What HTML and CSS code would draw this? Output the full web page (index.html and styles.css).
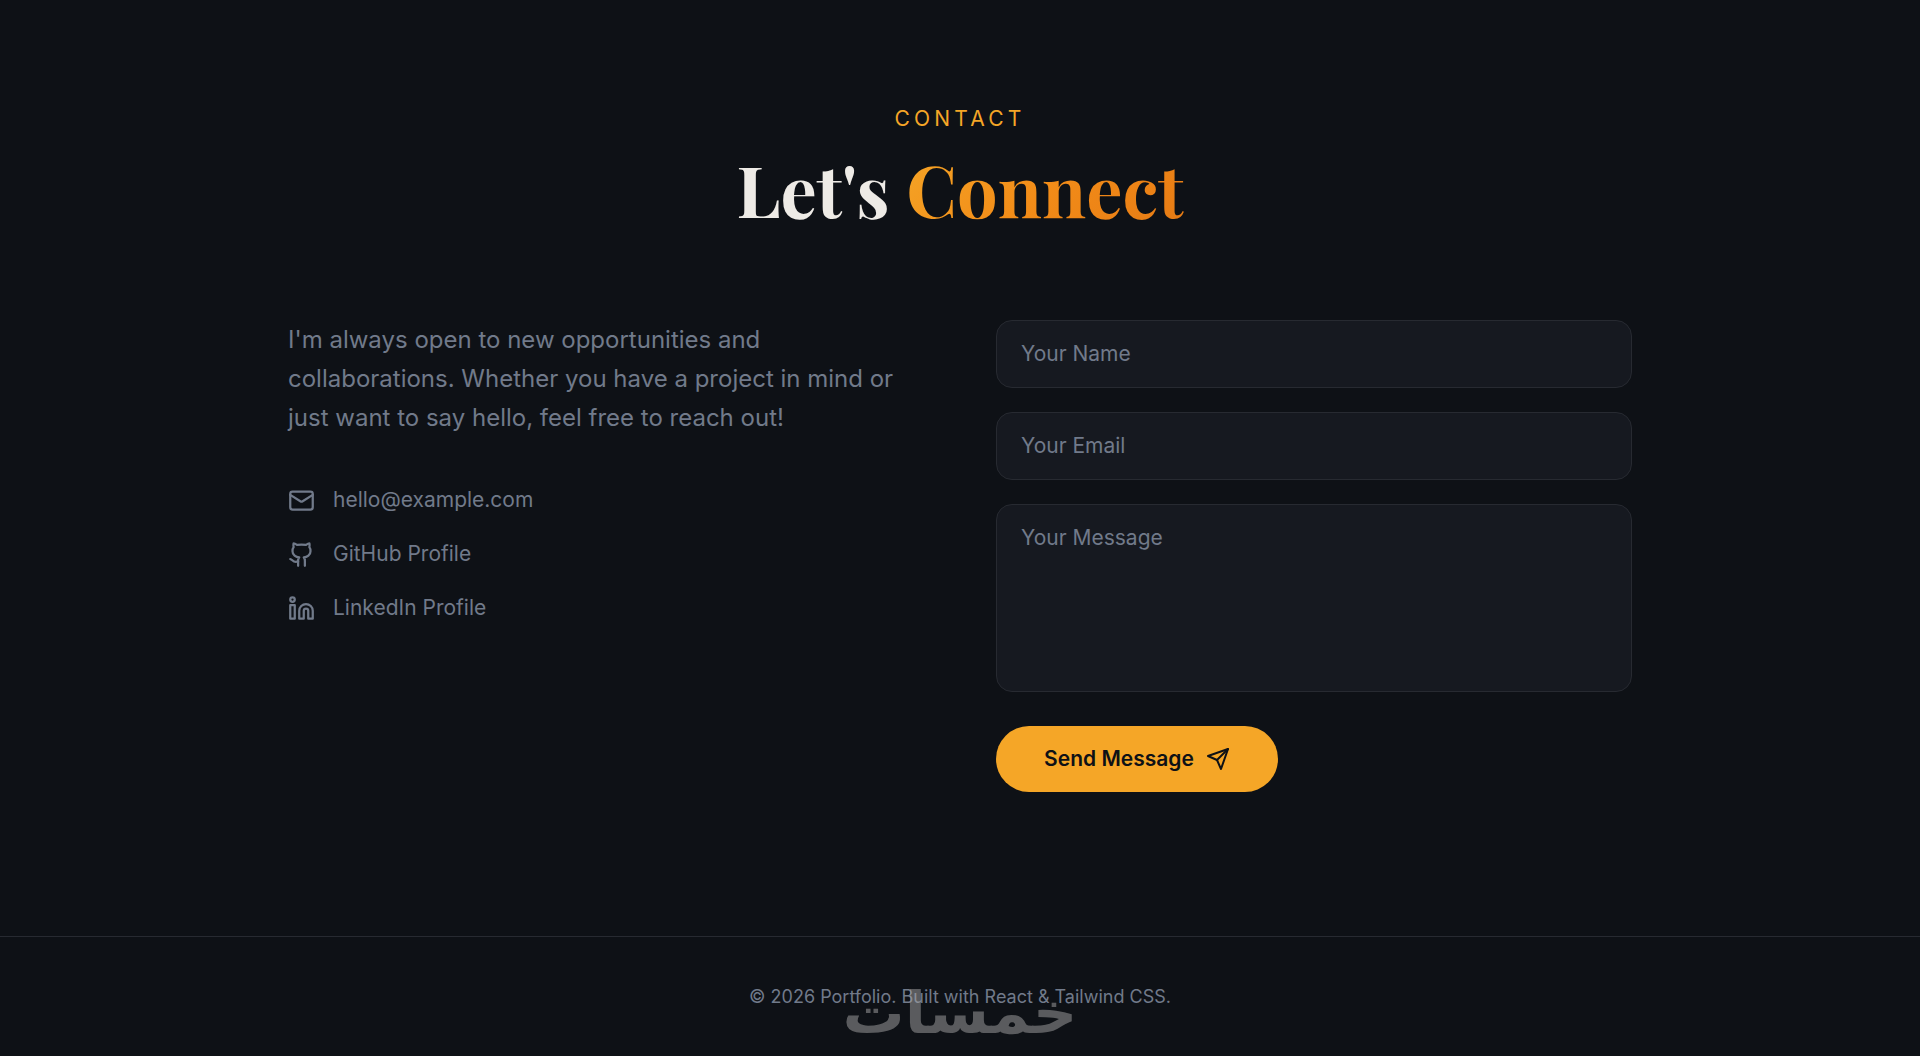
FILE: index.html
```
<!DOCTYPE html>
<html lang="en">
<head>
    <meta charset="UTF-8">
    <meta name="viewport" content="width=device-width, initial-scale=1.0">
    <title>Portfolio - Contact</title>
    <link rel="stylesheet" href="styles.css">
</head>
<body>
    <section id="contact" class="contact">
        <div class="heading">
            <p class="eyebrow">Contact</p>
            <h2>Let's <span class="gradient-text">Connect</span></h2>
        </div>

        <div class="contact-grid">
            <div class="info">
                <p class="intro">I'm always open to new opportunities and collaborations. Whether you have a project in mind or just want to say hello, feel free to reach out!</p>

                <div class="links">
                    <a href="mailto:hello@example.com">
                        <svg class="icon" viewBox="0 0 24 24"><rect width="20" height="16" x="2" y="4" rx="2"/><path d="m22 7-8.97 5.7a1.94 1.94 0 0 1-2.06 0L2 7"/></svg>
                        <span>hello@example.com</span>
                    </a>
                    <a href="#">
                        <svg class="icon" viewBox="0 0 24 24"><path d="M15 22v-4a4.8 4.8 0 0 0-1-3.5c3 0 6-2 6-5.5.08-1.25-.27-2.48-1-3.5.28-1.15.28-2.35 0-3.5 0 0-1 0-3 1.5-2.64-.5-5.36-.5-8 0C6 2 5 2 5 2c-.3 1.15-.3 2.35 0 3.5A5.403 5.403 0 0 0 4 9c0 3.5 3 5.5 6 5.5-.39.49-.68 1.05-.85 1.65-.17.6-.22 1.23-.15 1.85v4"/><path d="M9 18c-4.51 2-5-2-7-2"/></svg>
                        <span>GitHub Profile</span>
                    </a>
                    <a href="#">
                        <svg class="icon" viewBox="0 0 24 24"><path d="M16 8a6 6 0 0 1 6 6v7h-4v-7a2 2 0 0 0-2-2 2 2 0 0 0-2 2v7h-4v-7a6 6 0 0 1 6-6z"/><rect width="4" height="12" x="2" y="9"/><circle cx="4" cy="4" r="2"/></svg>
                        <span>LinkedIn Profile</span>
                    </a>
                </div>
            </div>

            <form class="form">
                <input type="text" placeholder="Your Name">
                <input type="email" placeholder="Your Email">
                <textarea placeholder="Your Message"></textarea>
                <button type="submit">
                    Send Message
                    <svg class="icon send" viewBox="0 0 24 24"><path d="m22 2-7 20-4-9-9-4Z"/><path d="M22 2 11 13"/></svg>
                </button>
            </form>
        </div>
    </section>

    <footer>
        <p>© 2026 Portfolio. Built with React &amp; Tailwind CSS.</p>
        <div class="watermark" lang="ar" dir="rtl">خمسات</div>
    </footer>
</body>
</html>
```

FILE: styles.css
```
* {
    box-sizing: border-box;
}

body {
    margin: 0;
    height: 1056px;
    overflow: hidden;
    display: flex;
    flex-direction: column;
    font-family: 'Inter', sans-serif;
    font-size: 21px;
    background-color: #0e1116;
    color: #eeebe6;
}

h2, p {
    margin: 0;
}

.contact {
    width: 1344px;
    height: 936px;
    margin: 0 auto;
    padding-top: 103px;
}

.heading {
    text-align: center;
    height: 217px;
}

.eyebrow {
    color: #f5a627;
    line-height: 32px;
    letter-spacing: 4.2px;
    text-transform: uppercase;
}

h2 {
    margin-top: 13px;
    font-family: 'Playfair Display', 'Liberation Serif', serif;
    font-size: 72px;
    font-weight: 700;
    line-height: 80px;
}

.gradient-text {
    background: linear-gradient(135deg, #f5a627, #f28c18 50%, #e67a14);
    -webkit-background-clip: text;
    background-clip: text;
    color: transparent;
}

.contact-grid {
    display: grid;
    grid-template-columns: 1fr 1fr;
    gap: 72px;
}

.intro {
    font-size: 24px;
    line-height: 39px;
    color: #717a8a;
}

.links {
    display: flex;
    flex-direction: column;
    gap: 22px;
    margin-top: 47px;
}

.links a {
    display: flex;
    align-items: center;
    gap: 18px;
    line-height: 32px;
    color: #717a8a;
    text-decoration: none;
}

.icon {
    width: 27px;
    height: 27px;
    fill: none;
    stroke: currentColor;
    stroke-width: 2;
    stroke-linecap: round;
    stroke-linejoin: round;
}

.form {
    display: flex;
    flex-direction: column;
    gap: 24px;
}

input, textarea {
    display: block;
    width: 100%;
    height: 68px;
    padding: 15px 24px 17px;
    border: 1px solid #272a31;
    border-radius: 16px;
    background-color: #161920;
    color: #eeebe6;
    font-family: inherit;
    font-size: 21px;
    line-height: 32px;
    resize: none;
}

textarea {
    height: 188px;
    padding-top: 17px;
}

input::placeholder, textarea::placeholder {
    color: #717a8a;
}

button {
    display: flex;
    align-items: center;
    justify-content: center;
    gap: 12px;
    align-self: flex-start;
    width: 282px;
    height: 66px;
    margin-top: 10px;
    padding: 0 6px 1px;
    border: none;
    border-radius: 33px;
    background-color: #f5a627;
    color: #0e1116;
    font-family: inherit;
    font-size: 21px;
    font-weight: 600;
}

.send {
    width: 24px;
    height: 24px;
}

footer {
    position: relative;
    flex: 1;
    padding-top: 46px;
    border-top: 1px solid #272a31;
    text-align: center;
    font-size: 18px;
    line-height: 28px;
    color: #717a8a;
}

.watermark {
    position: absolute;
    top: 41px;
    left: 841px;
    width: 238px;
    font-family: 'DejaVu Sans', sans-serif;
    font-size: 62px;
    font-weight: 700;
    line-height: 70px;
    color: #a5a5a5;
    opacity: 0.5;
    transform: scaleY(0.93);
}
```
